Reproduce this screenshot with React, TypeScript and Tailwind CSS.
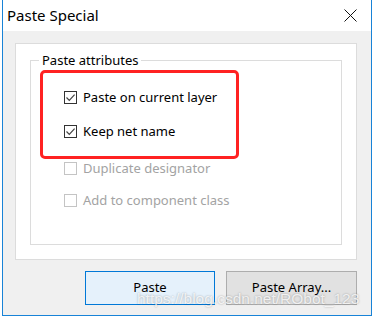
import React from 'react';

const ui = { fontFamily: '"Noto Sans", "Open Sans", sans-serif' };

function Check({ checked, disabled, label }: { checked?: boolean; disabled?: boolean; label: string }) {
  return (
    <div className="flex items-center h-[17px] pl-[33px]">
      <span
        className={`w-[13px] h-[13px] border bg-white flex items-center justify-center ${
          disabled ? 'border-[#c4c4c4]' : 'border-[#333333]'
        }`}
      >
        {checked && (
          <svg width="11" height="11" viewBox="0 0 11 11" fill="none" stroke="#444" strokeWidth="1.2">
            <path d="M1.5 5.5l2.8 2.8L9.6 2.6" />
          </svg>
        )}
      </span>
      <span className={`ml-[6px] text-[13px] leading-[17px] ${disabled ? 'text-[#a3a3a3]' : 'text-black'}`}>{label}</span>
    </div>
  );
}

export default function App() {
  return (
    <div className="w-[373px] h-[319px] bg-white relative overflow-hidden" style={ui}>
      <div className="ml-[2px] w-[370px] h-[316px] border-x border-b border-[#1883d7] flex flex-col">
        {/* Title bar */}
        <div className="h-[31px] bg-white flex items-center justify-between pl-[4px] pr-[14px] shrink-0">
          <span className="text-[15px] text-black leading-none">Paste Special</span>
          <svg width="13" height="13" viewBox="0 0 13 13" stroke="#111" strokeWidth="1">
            <path d="M0.5 0.5l12 12M12.5 0.5l-12 12" />
          </svg>
        </div>

        {/* Body */}
        <div className="flex-1 bg-[#f0f0f0] flex flex-col">
          <div className="ml-[12px] mt-[12px] w-[342px] h-[217px] bg-white border border-[#dcdcdc] px-[14px]">
            <fieldset className="mt-[8px] w-[312px] h-[193px] border border-[#dcdcdc]">
              <legend className="ml-[8px] px-[3px] text-[13px] leading-[17px] text-black">Paste attributes</legend>
              <div className="mt-[20px]">
                <Check checked label="Paste on current layer" />
              </div>
              <div className="mt-[17px]">
                <Check checked label="Keep net name" />
              </div>
              <div className="mt-[20px]">
                <Check disabled label="Duplicate designator" />
              </div>
              <div className="mt-[15px]">
                <Check disabled label="Add to component class" />
              </div>
            </fieldset>
          </div>

          <div className="mt-[11px] flex justify-end gap-[11px] pr-[14px]">
            <button className="w-[130px] h-[34px] bg-[#e5f1fb] border border-[#0078d7] text-[13px] text-black">
              Paste
            </button>
            <button className="w-[131px] h-[34px] bg-[#e1e1e1] border border-[#adadad] text-[13px] text-black">
              Paste Array...
            </button>
          </div>
        </div>
      </div>

      {/* Annotation */}
      <div className="absolute left-[40px] top-[70px] w-[199px] h-[89px] border-[3px] border-[#ff2222] rounded-[5px]" />

      {/* Watermark */}
      <div
        className="absolute left-[137px] top-[289px] text-[15.5px] leading-[20px] whitespace-nowrap text-white/80 [text-shadow:0_0_2px_rgba(0,0,0,0.35)]"
        style={{ fontFamily: '"Liberation Sans", Arial, sans-serif' }}
      >
        https://blog.csdn.net/RObot_123
      </div>
    </div>
  );
}
